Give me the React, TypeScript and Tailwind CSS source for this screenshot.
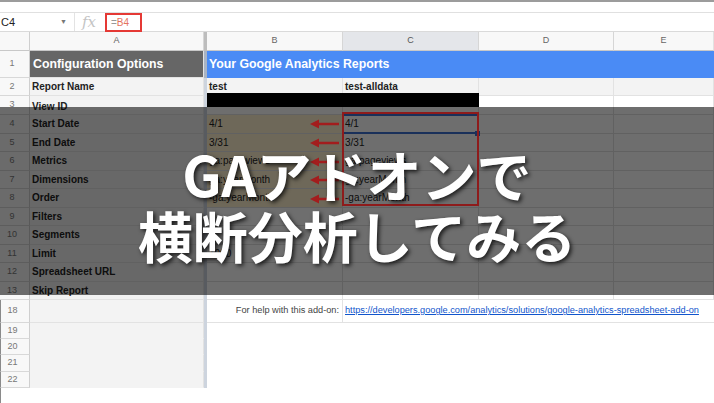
import type { JSX, ReactNode } from 'react'

// column widths (px): row numbers, A, frozen divider, B, C, D, E
const COLS = [30, 174, 3, 136, 136, 135, 100]

const labels = [
  'Start Date',
  'End Date',
  'Metrics',
  'Dimensions',
  'Order',
  'Filters',
  'Segments',
  'Limit',
  'Spreadsheet URL',
  'Skip Report',
]
const valuesB = ['4/1', '3/31', 'ga:pageviews', 'ga:yearMonth', '-ga:yearMonth', '', '', '1000', '', '']
const valuesC = ['4/1', '3/31', 'ga:pageviews', 'ga:yearMonth', '-ga:yearMonth', '', '', '', '', '']

function Cell({
  w,
  className = '',
  children,
}: {
  w: number
  className?: string
  children?: ReactNode
}): JSX.Element {
  return (
    <div
      className={`flex h-full shrink-0 items-center overflow-visible whitespace-nowrap border-r border-b border-[#e2e2e2] ${className}`}
      style={{ width: w }}
    >
      {children}
    </div>
  )
}

function RowNum({ n, className = '' }: { n: number | string; className?: string }): JSX.Element {
  return (
    <Cell w={COLS[0]} className={`justify-center bg-[#f8f8f8] pr-[5px] text-[9px] text-[#777] border-r-[#cfcfcf] border-b-[#d8d8d8] ${className}`}>
      {n}
    </Cell>
  )
}

function Divider(): JSX.Element {
  return <div className="h-full w-[3px] shrink-0 bg-[#cdd4de]" />
}

function Arrow({ top }: { top: number }): JSX.Element {
  return (
    <svg className="absolute left-[310px]" style={{ top }} width="30" height="10" viewBox="0 0 30 10">
      <polygon points="0,5 9,0.5 9,9.5" fill="#a31d1d" />
      <line x1="8" y1="5" x2="29" y2="5" stroke="#a31d1d" strokeWidth="2.5" />
    </svg>
  )
}

export default function App(): JSX.Element {
  const rowCenters = [124, 143, 162, 180, 199]

  return (
    <div className="relative h-[403px] w-[714px] overflow-hidden bg-white font-['Liberation_Sans',Arial,sans-serif] text-[10px] text-[#222]">
      {/* Window edge + toolbar remnant */}
      <div className="h-[2px] bg-[#9c9c9c]" />
      <div className="h-[11px] border-b border-[#e0e0e0]" />

      {/* Formula bar */}
      <div className="flex h-[19px] items-center border-b border-[#dadada]">
        <div className="w-[60px] pl-[1px] text-[11px] text-[#222]">C4</div>
        <div className="w-[14px] text-[7px] text-[#777]">▼</div>
        <div className="h-full w-px bg-[#e3e3e3]" />
        <div className="w-[30px] pl-[7px] font-['DejaVu_Serif',serif] text-[15px] italic leading-none text-[#c4c4c4]">fx</div>
        <div className="flex h-[19px] w-[37px] items-center border-2 border-[#e53935] pl-[4px] text-[10px]">
          <span className="text-[#999]">=</span>
          <span className="text-[#e5735e]">B4</span>
        </div>
      </div>

      {/* Column headers */}
      <div className="flex h-[19px]">
        <Cell w={COLS[0]} className="bg-[#f8f8f8] border-r-[#cfcfcf] border-b-[#c8c8c8]" />
        <Cell w={COLS[1]} className="justify-center bg-[#f8f8f8] text-[9px] text-[#666] border-r-[#d6d6d6] border-b-[#c8c8c8]">A</Cell>
        <div className="h-full w-[3px] shrink-0 bg-[#bdbdbd]" />
        <Cell w={COLS[3]} className="justify-center bg-[#f8f8f8] text-[9px] text-[#666] border-r-[#d6d6d6] border-b-[#c8c8c8]">B</Cell>
        <Cell w={COLS[4]} className="justify-center bg-[#e4e6ea] text-[9px] text-[#555] border-r-[#d6d6d6] border-b-[#c8c8c8]">C</Cell>
        <Cell w={COLS[5]} className="justify-center bg-[#f8f8f8] text-[9px] text-[#666] border-r-[#d6d6d6] border-b-[#c8c8c8]">D</Cell>
        <Cell w={COLS[6]} className="justify-center bg-[#f8f8f8] text-[9px] text-[#666] border-b-[#c8c8c8]">E</Cell>
      </div>

      {/* Row 1 */}
      <div className="flex h-[27px]">
        <RowNum n={1} />
        <Cell w={COLS[1]} className="bg-[#666666] pl-[3px] text-[12.3px] font-bold text-white border-[#666666]">
          Configuration Options
        </Cell>
        <div className="h-full w-[3px] shrink-0 bg-[#a9b4c4]" />
        <div className="flex h-full flex-1 items-center bg-[#4a8bf5] pl-[2px] text-[12.3px] font-bold text-white">
          Your Google Analytics Reports
        </div>
      </div>

      {/* Row 2 */}
      <div className="flex h-[18px]">
        <RowNum n={2} />
        <Cell w={COLS[1]} className="bg-[#f3f3f3] pl-[2px] font-bold">Report Name</Cell>
        <Divider />
        <Cell w={COLS[3]} className="bg-[#f3f3f3] pl-[2px] font-bold">test</Cell>
        <Cell w={COLS[4]} className="bg-[#f3f3f3] pl-[2px] font-bold">test-alldata</Cell>
        <Cell w={COLS[5]} className="bg-[#f3f3f3]" />
        <Cell w={COLS[6]} className="bg-[#f3f3f3]" />
      </div>

      {/* Row 3 */}
      <div className="flex h-[19px]">
        <RowNum n={3} />
        <Cell w={COLS[1]} className="bg-[#f3f3f3] pl-[2px] pt-[3px] font-bold">View ID</Cell>
        <Divider />
        <Cell w={COLS[3]} />
        <Cell w={COLS[4]} />
        <Cell w={COLS[5]} />
        <Cell w={COLS[6]} />
      </div>

      {/* Rows 4-13 */}
      {labels.map((label, i) => (
        <div key={label} className="flex h-[18.5px]">
          <RowNum n={i + 4} />
          <Cell w={COLS[1]} className="bg-[#f1f1f1] pl-[2px] font-bold">{label}</Cell>
          <Divider />
          <Cell w={COLS[3]} className={`pl-[2px] ${i < 5 ? 'bg-[#fff1cf]' : ''}`}>{valuesB[i]}</Cell>
          <Cell w={COLS[4]} className="relative pl-[2px]">
            {valuesC[i]}
            {i === 0 && (
              <>
                <div className="absolute inset-x-0 -top-px -bottom-px border-y-2 border-[#3a6fd0]" />
                <div className="absolute -right-[2px] -bottom-[3px] h-[5px] w-[5px] bg-[#3a6fd0]" />
              </>
            )}
          </Cell>
          <Cell w={COLS[5]} />
          <Cell w={COLS[6]} />
        </div>
      ))}

      {/* Row 18 */}
      <div className="flex h-[23px]">
        <RowNum n={18} className="border-l border-l-[#8a8a8a]" />
        <Cell w={COLS[1]} className="bg-[#f3f3f3]" />
        <Divider />
        <Cell w={COLS[3]} className="justify-end pr-[3px] text-[9.2px] text-[#444]">For help with this add-on:</Cell>
        <div className="flex h-full flex-1 items-center border-b border-[#e2e2e2] pl-[2px] text-[9.2px] whitespace-nowrap">
          <span className="text-[#1155cc] underline">
            https://developers.google.com/analytics/solutions/google-analytics-spreadsheet-add-on
          </span>
        </div>
      </div>

      {/* Rows 19-22 */}
      {[19, 20, 21, 22].map(n => (
        <div key={n} className={`flex ${n === 21 ? 'h-[17px]' : 'h-[16px]'}`}>
          <RowNum n={n} className="border-l border-l-[#8a8a8a]" />
          <Cell w={COLS[1]} className="bg-[#f3f3f3] border-b-[#f3f3f3]" />
          <Divider />
        </div>
      ))}
      <div className="h-[20px] border-l border-[#8a8a8a]" />

      {/* Redacted view id */}
      <div className="absolute left-[207px] top-[93px] h-[14px] w-[272px] bg-black" />

      {/* Title band over the sheet */}
      <div className="absolute inset-x-0 top-[107px] h-[188px] bg-black/[0.57]">
        {rowCenters.map(y => (
          <Arrow key={y} top={y - 107 - 5} />
        ))}
        <div className="absolute left-[342px] top-[5px] h-[94px] w-[137px] border-2 border-[#8e1b1b]" />

        <div className="relative flex flex-col items-center pt-[36px] font-['Noto_Sans_CJK_JP','Noto_Sans',sans-serif] text-[55px] leading-[61px] font-bold text-white [text-shadow:2px_2px_4px_rgba(0,0,0,0.75)]">
          <div>GAアドオンで</div>
          <div>横断分析してみる</div>
        </div>
      </div>
    </div>
  )
}
